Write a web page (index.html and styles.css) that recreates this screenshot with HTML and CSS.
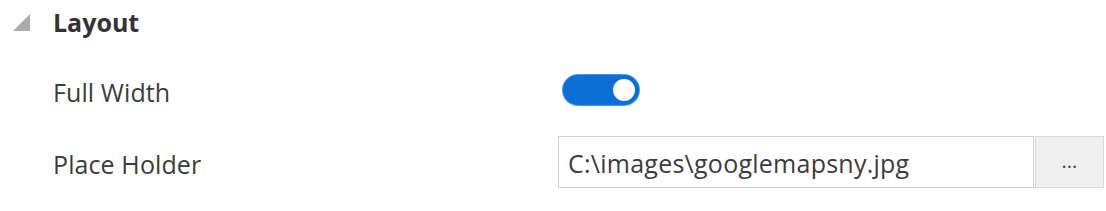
FILE: index.html
```html
<!DOCTYPE html>
<html>
<head>
<meta charset="utf-8">
<link rel="stylesheet" href="styles.css">
</head>
<body>
<div class="section">
  <div class="section-header">
    <svg class="caret" width="17" height="17" viewBox="0 0 17 17"><polygon points="17,0 17,17 0,17" fill="#ababab"/></svg>
    <span class="section-title">Layout</span>
  </div>
  <div class="row">
    <div class="label">Full Width</div>
    <div class="control">
      <div class="toggle"><div class="knob"></div></div>
    </div>
  </div>
  <div class="row">
    <div class="label">Place Holder</div>
    <div class="control">
      <div class="input">C:\images\googlemapsny.jpg</div>
      <div class="browse">...</div>
    </div>
  </div>
</div>
</body>
</html>
```
FILE: styles.css
```css
html, body {
  margin: 0;
  padding: 0;
  background: #ffffff;
}
body {
  font-family: "Open Sans", "Noto Sans", sans-serif;
  font-size: 25px;
  color: #3b3b3b;
  width: 1106px;
  height: 211px;
  overflow: hidden;
}
.section {
  padding-left: 13px;
}
.section-header {
  height: 44px;
  display: flex;
  align-items: center;
  margin-bottom: 10px;
}
.caret {
  display: block;
  margin-right: 23px;
}
.section-title {
  font-weight: 700;
  color: #333333;
}
.row {
  height: 72px;
  display: flex;
  align-items: center;
  padding-left: 40px;
}
.label {
  width: 505px;
  padding-top: 4px;
  letter-spacing: 0.1px;
}
.control {
  display: flex;
  align-items: center;
}
.toggle {
  width: 76px;
  height: 30px;
  margin-left: 5px;
  border-radius: 15px;
  background: #0b6fd3;
  box-shadow: 0 0 0 1px #4a9aea;
  display: flex;
  align-items: center;
  justify-content: flex-end;
  padding-right: 4px;
  box-sizing: border-box;
}
.knob {
  width: 22px;
  height: 22px;
  border-radius: 50%;
  background: #ffffff;
}
.input {
  width: 476px;
  height: 52px;
  box-sizing: border-box;
  border: 1px solid #d2d2d2;
  padding-left: 9px;
  padding-top: 2px;
  display: flex;
  align-items: center;
  color: #3b3b3b;
  letter-spacing: 0.25px;
}
.browse {
  width: 69px;
  height: 52px;
  box-sizing: border-box;
  margin-left: 1px;
  border: 1px solid #d9d9d9;
  background: #efefef;
  display: flex;
  align-items: center;
  justify-content: center;
  font-size: 20px;
  color: #444;
  padding-bottom: 4px;
}
```
